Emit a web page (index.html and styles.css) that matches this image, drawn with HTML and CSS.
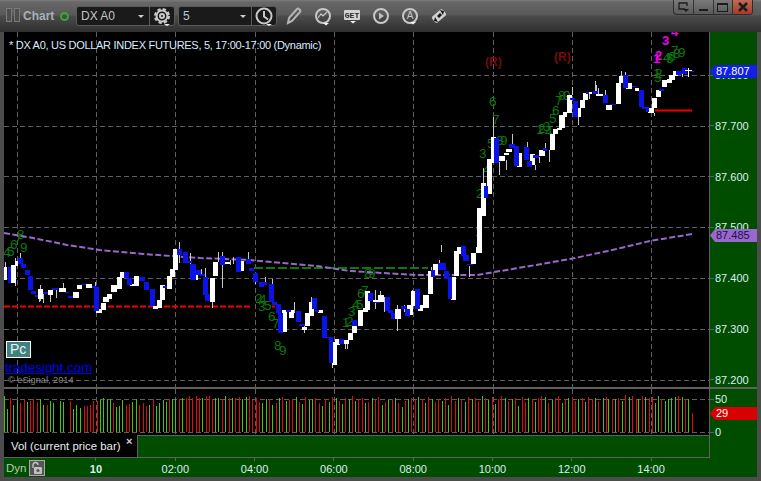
FILE: index.html
```html
<!DOCTYPE html>
<html lang="en">
<head>
<meta charset="utf-8">
<title>Chart</title>
<link rel="stylesheet" href="styles.css">
</head>
<body>
<div class="window">
  <header class="titlebar">
    <svg class="logo" width="14" height="14" viewBox="0 0 14 14"><rect class="logo-box" x=".5" y=".5" width="5" height="13"/><rect class="logo-box" x="8.5" y=".5" width="5" height="13"/></svg>
    <span class="app-name">Chart</span>
    <span class="status-ring"></span>
    <div class="combo">
      <span class="combo-value">DX A0</span>
      <span class="combo-arrow"></span>
      <span class="combo-btn">
        <svg width="25" height="20" viewBox="0 0 25 20"><circle class="gear-teeth" cx="12" cy="10" r="6.5"/><circle class="ico-line" cx="12" cy="10" r="5.5"/><circle class="ico-line" cx="12" cy="10" r="2"/><path class="ico-fill" d="M14 18h6l-3 2z"/></svg>
      </span>
    </div>
    <div class="combo combo-second">
      <span class="combo-value combo-num">5</span>
      <span class="combo-arrow"></span>
      <span class="combo-btn">
        <svg width="25" height="20" viewBox="0 0 25 20"><circle class="ico-line" cx="12" cy="10" r="7.5"/><path class="ico-line" d="M12 5v5.500l4 3"/><path class="ico-fill" d="M14 18h6l-3 2z"/></svg>
      </span>
    </div>
    <div class="tools">
      <span class="tool"><svg width="18" height="20" viewBox="0 0 18 20"><path class="ico-dim" d="M3 17l1-5 8-9q1-1 2 0l1 1q1 1 0 2l-8 9z"/></svg></span>
      <span class="tool"><svg width="20" height="20" viewBox="0 0 20 20"><circle class="ico-line" cx="10" cy="10" r="7"/><path class="ico-thin" d="M5 12l3-4 2 2 4-4"/><path class="ico-fill" d="M10 17h6l-3 2.500z"/></svg></span>
      <span class="tool"><svg width="20" height="20" viewBox="0 0 20 20"><rect class="get-box" x="2" y="4" width="16" height="10" rx="1"/><text class="get-text" x="10" y="12">GET</text><path class="ico-fill" d="M8 15h6l-3 2.500z"/></svg></span>
      <span class="tool"><svg width="20" height="20" viewBox="0 0 20 20"><circle class="ico-line" cx="10" cy="10" r="7"/><path class="ico-fill-dim" d="M8 6.500l5 3.500-5 3.500z"/></svg></span>
      <span class="tool"><svg width="20" height="20" viewBox="0 0 20 20"><circle class="ico-line" cx="10" cy="10" r="7"/><text class="a-text" x="10" y="13">A</text><path class="ico-fill" d="M10 16h6l-3 2.500z"/></svg></span>
      <span class="tool"><svg width="20" height="20" viewBox="0 0 20 20"><rect class="tag-body" x="3" y="6" width="14" height="8" rx="2" transform="rotate(-40 10 10)"/><path class="tag-arrow" d="M11 4l4 1-1 4zM9 16l-4-1 1-4zM8 10l3-3 2 2-3 3z"/></svg></span>
    </div>
    <div class="win-controls">
      <span class="win-btn"><svg width="14" height="12" viewBox="0 0 14 12"><path class="win-line" d="M9 8H3V2h8v3"/><path class="win-fill" d="M7 8h6l-3 3z"/></svg></span>
      <span class="win-btn"><span class="win-min"></span></span>
      <span class="win-btn"><span class="win-max"></span></span>
      <span class="win-btn win-close"><svg width="12" height="10" viewBox="0 0 12 10"><path class="win-x" d="M2 1l8 8M10 1l-8 8"/></svg></span>
    </div>
  </header>

  <main class="content">
    <div class="row price-row">
      <div class="pane">
        <svg class="chart" width="705" height="355" viewBox="4 32 705 355">
          <path class="grid" d="M4 75.500H709M4 126.500H709M4 176.500H709M4 227.500H709M4 278.500H709M4 329.500H709M4 380.500H709M17.500 32V387M96.500 32V387M175.500 32V387M255.500 32V387M334.500 32V387M413.500 32V387M493.500 32V387M572.500 32V387M651.500 32V387"/>
          <g class="td-green">
            <text x="3" y="257">4</text><text x="7" y="256">5</text><text x="10" y="249">6</text><text x="14" y="244">7</text><text x="17" y="239">8</text><text x="20" y="252">9</text>
            <text x="255" y="303">2</text><text x="259" y="304">4</text><text x="258" y="311">3</text><text x="264" y="310">5</text><text x="268" y="321">6</text><text x="272" y="328">7</text><text x="274" y="350">8</text><text x="279" y="355">9</text>
            <text x="342" y="327">1</text><text x="346" y="326">2</text><text x="348" y="316">3</text><text x="352" y="309">4</text><text x="356" y="309">5</text><text x="357" y="298">6</text><text x="361" y="295">7</text><text x="364" y="278">8</text><text x="368" y="278">9</text>
            <text x="475" y="236">1</text><text x="476" y="198">2</text><text x="479" y="158">3</text><text x="483" y="174">4</text><text x="487" y="148">5</text><text x="489" y="106">6</text><text x="492" y="124">7</text><text x="496" y="145">8</text><text x="500" y="145">9</text>
            <text x="536" y="134">1</text><text x="538" y="133">2</text><text x="543" y="131">3</text><text x="545" y="136">4</text><text x="549" y="123">5</text><text x="552" y="115">6</text><text x="555" y="105">7</text><text x="558" y="100">8</text><text x="563" y="100">9</text>
            <text x="653" y="78">1</text><text x="655" y="78">2</text><text x="654" y="82">3</text><text x="663" y="62">4</text><text x="666" y="63">5</text><text x="668" y="61">6</text><text x="671" y="55">7</text><text x="673" y="58">8</text><text x="678" y="57">9</text>
          </g>
          <path class="line-green" d="M254 268H428"/>
          <path class="line-purple" d="M4 233L33 238L67 245L100 250L143 254L200 258L250 260L283 263L317 266L350 271L383 273L417 275L477 275L530 266L570 259L608 251L650 241L692 234"/>
          <path class="line-red" d="M4 306.500H252M272 306.500H275"/>
          <path class="line-solid-red" d="M655 110.500H692"/>
          <path class="wick" d="M5.500 262V267M15.500 258V286M20.500 253V258M40.500 285V301M43.500 292V303M50.500 291V302M56.500 288V298M63.500 283V292M39.500 299V302M95.500 282V287M179.500 242V263M190.500 253V264M201.500 269V275M205.500 268V278M212.500 298V308M222.500 252V288M218.500 252V262M230.500 260V265M233.500 257V264M248.500 252V260M255.500 273V284M265.500 277V284M272.500 279V286M294.500 302V313M304.500 324V333M311.500 297V307M332.500 363V368M345.500 343V349M347.500 344V349M375.500 290V309M380.500 291V297M384.500 297V312M397.500 305V331M404.500 305V312M412.500 290V306M431.500 267V272M439.500 260V266M469.500 266V277M441.500 245V252M469 266V277M493.500 117V138M483.500 168V183M499.500 162V175M506.500 160V170M512.500 134V145M527.500 142V150M535.500 165V170M539.500 157V163M545.500 143V150M549.500 150V162M572.500 87V95M578.500 117V125M589.500 92V99M595.500 81V92M598.500 88V94M605.500 90V96M596.500 85V95M621.500 71V76M625.500 72V76M688.500 68V77M682.500 74V77M631.500 83V89M654.500 113V116"/>
          <path class="body-white" d="M4 267h3v13h-3zM11 265h5v18h-5zM15 261h3v5h-3zM38 289h5v10h-5zM48 290h5v5h-5zM59 288h7v4h-7zM73 292h6v6h-6zM77 285h5v4h-5zM86 284h6v4h-6zM96 309h6v4h-6zM101 303h5v7h-5zM103 297h6v5h-6zM107 294h5v5h-5zM111 285h6v7h-6zM117 277h5v12h-5zM120 272h5v6h-5zM130 284h5v2h-5zM134 276h5v10h-5zM153 306h5v3h-5zM157 300h5v8h-5zM160 285h5v15h-5zM167 276h5v13h-5zM170 269h5v8h-5zM173 249h5v21h-5zM193 273h5v7h-5zM210 278h5v24h-5zM213 262h5v14h-5zM225 262h5v2h-5zM239 261h5v10h-5zM282 310h5v22h-5zM289 310h5v8h-5zM302 327h5v3h-5zM305 313h5v13h-5zM309 302h5v14h-5zM318 310h5v3h-5zM332 342h5v23h-5zM335 339h5v6h-5zM344 340h5v4h-5zM348 333h5v7h-5zM352 320h5v13h-5zM358 310h5v16h-5zM363 308h5v4h-5zM365 291h5v19h-5zM373 300h5v2h-5zM378 295h6v7h-6zM395 309h6v10h-6zM407 305h6v10h-6zM411 291h5v15h-5zM418 305h5v6h-5zM423 295h6v13h-6zM428 271h5v23h-5zM433 264h5v11h-5zM451 277h5v23h-5zM454 251h5v25h-5zM457 247h5v7h-5zM471 253h5v11h-5zM476 247h6v6h-6zM477 208h5v45h-5zM481 183h5v33h-5zM487 159h5v35h-5zM491 137h5v26h-5zM499 156h6v5h-6zM504 153h5v2h-5zM506 149h6v3h-6zM517 153h5v14h-5zM530 154h5v11h-5zM539 150h6v6h-6zM550 134h5v16h-5zM553 129h5v5h-5zM557 128h5v2h-5zM559 115h6v13h-6zM563 112h4v5h-4zM567 95h5v18h-5zM576 108h5v9h-5zM580 100h5v8h-5zM583 93h5v7h-5zM589 92h3v2h-3zM596 94h7v2h-7zM606 105h6v5h-6zM616 83h5v21h-5zM619 76h4v7h-4zM626 83h6v6h-6zM635 88h4v3h-4zM648 108h6v5h-6zM652 98h5v10h-5zM656 90h5v7h-5zM662 80h5v7h-5zM667 79h5v4h-5zM669 75h6v5h-6zM673 71h5v5h-5zM679 73h4v2h-4zM686 70h6v1h-6z"/>
          <path class="body-blue" d="M8 267h3v16h-3zM18 258h5v6h-5zM21 264h5v4h-5zM25 270h5v5h-5zM28 276h5v14h-5zM31 291h5v3h-5zM35 295h3v2h-3zM43 292h5v2h-5zM52 288h6v2h-6zM65 292h4v1h-4zM68 296h5v2h-5zM81 284h5v1h-5zM92 286h5v2h-5zM94 287h5v24h-5zM124 272h5v6h-5zM127 278h5v7h-5zM139 277h6v4h-6zM144 282h5v8h-5zM150 289h5v17h-5zM163 286h4v2h-4zM177 249h5v6h-5zM183 252h5v11h-5zM187 261h5v2h-5zM190 264h6v16h-6zM196 270h5v5h-5zM200 274h5v2h-5zM203 277h5v18h-5zM205 294h5v7h-5zM220 256h5v9h-5zM236 257h5v15h-5zM246 259h5v5h-5zM249 268h5v3h-5zM253 273h5v9h-5zM259 282h5v5h-5zM264 282h3v3h-3zM269 284h5v18h-5zM272 302h5v3h-5zM276 304h5v9h-5zM278 313h5v20h-5zM286 310h5v2h-5zM296 311h5v11h-5zM299 324h6v2h-6zM312 298h5v11h-5zM315 310h4v2h-4zM322 316h5v22h-5zM327 337h4v1h-4zM329 337h4v26h-4zM339 339h5v5h-5zM352 320h5v6h-5zM368 293h5v8h-5zM375 302h5v1h-5zM385 297h5v14h-5zM388 310h5v3h-5zM391 313h4v6h-4zM401 306h5v3h-5zM405 309h5v7h-5zM415 289h5v20h-5zM431 270h4v7h-4zM438 263h8v7h-8zM444 271h5v8h-5zM448 277h4v22h-4zM461 246h5v10h-5zM463 255h6v6h-6zM467 264h6v1h-6zM484 186h4v12h-4zM494 138h5v25h-5zM509 144h6v4h-6zM514 146h5v20h-5zM524 147h5v13h-5zM527 161h5v6h-5zM533 155h6v3h-6zM543 148h4v3h-4zM570 98h5v2h-5zM573 101h5v16h-5zM586 92h3v2h-3zM593 91h5v3h-5zM603 95h5v8h-5zM610 104h6v1h-6zM623 75h5v13h-5zM632 86h5v1h-5zM639 90h5v17h-5zM642 107h6v2h-6zM646 107h3v5h-3zM659 89h5v2h-5zM676 71h6v4h-6zM682 68h5v6h-5zM690 71h4v1h-4z"/>
          <path class="wick-top" d="M688.500 68V77M685 70.500H692"/>
          <g class="td-magenta">
            <text x="653" y="63">1</text><text x="655" y="60">2</text><text x="662" y="45">3</text><text x="671" y="36">4</text>
          </g>
          <g class="reversal">
            <text x="485" y="66">(R)</text><text x="554" y="61">(R)</text>
          </g>
        </svg>
        <div class="caption">* DX A0, US DOLLAR INDEX FUTURES, 5, 17:00-17:00 (Dynamic)</div>
        <div class="notes">
          <span class="pc-badge">Pc</span>
          <a class="site-link" href="#">tradesight.com</a>
          <span class="copyright">© eSignal, 2014</span>
        </div>
      </div>
      <div class="axis price-axis">
        <span class="tick">87.800</span>
        <span class="tick">87.700</span>
        <span class="tick">87.600</span>
        <span class="tick">87.500</span>
        <span class="tick">87.400</span>
        <span class="tick">87.300</span>
        <span class="tick">87.200</span>
        <span class="tag tag-blue">87.807</span>
        <span class="tag tag-purple">87.485</span>
      </div>
    </div>
    <div class="divider"></div>
    <div class="row vol-row">
      <div class="pane">
        <svg class="chart" width="705" height="46" viewBox="4 389 705 46">
          <path class="grid" d="M4 399.500H709M4 432.500H709M17.500 389V435M96.500 389V435M175.500 389V435M255.500 389V435M334.500 389V435M413.500 389V435M493.500 389V435M572.500 389V435M651.500 389V435"/>
          <path class="vol-green" d="M4.500 396V432M7.500 409V432M13.500 405V432M17.500 400V432M27.500 402V432M40.500 399V432M43.500 405V432M50.500 401V432M53.500 403V432M60.500 401V432M63.500 402V432M73.500 409V432M76.500 405V432M80.500 408V432M100.500 400V432M103.500 398V432M107.500 399V432M110.500 399V432M116.500 407V432M119.500 406V432M122.500 400V432M132.500 402V432M136.500 399V432M149.500 405V432M156.500 406V432M159.500 403V432M163.500 400V432M166.500 402V432M172.500 399V432M175.500 399V432M182.500 398V432M202.500 398V432M215.500 398V432M218.500 398V432M225.500 396V432M232.500 398V432M242.500 399V432M246.500 397V432M262.500 403V432M266.500 399V432M272.500 405V432M279.500 398V432M286.500 401V432M296.500 397V432M302.500 404V432M309.500 400V432M312.500 399V432M322.500 406V432M329.500 402V432M336.500 398V432M342.500 404V432M349.500 399V432M355.500 401V432M365.500 403V432M372.500 398V432M382.500 405V432M388.500 400V432M395.500 398V432M402.500 407V432M408.500 399V432M418.500 397V432M425.500 403V432M432.500 399V432M442.500 401V432M448.500 405V432M458.500 398V432M465.500 402V432M472.500 399V432M482.500 396V432M488.500 400V432M495.500 404V432M505.500 398V432M512.500 399V432M518.500 406V432M528.500 398V432M535.500 402V432M545.500 397V432M552.500 400V432M562.500 403V432M568.500 398V432M578.500 399V432M585.500 402V432M595.500 398V432M603.500 398V432M608.500 399V432M615.500 399V432M622.500 401V432M629.500 397V432M638.500 399V432M645.500 397V432M655.500 403V432M658.500 396V432M665.500 401V432M668.500 399V432M671.500 398V432M675.500 397V432M682.500 397V432M688.500 399V432"/>
          <path class="vol-red" d="M10.500 398V432M20.500 403V432M24.500 399V432M30.500 401V432M33.500 399V432M37.500 402V432M47.500 405V432M70.500 401V432M84.500 406V432M87.500 406V432M90.500 405V432M93.500 401V432M97.500 401V432M113.500 403V432M126.500 405V432M129.500 404V432M139.500 405V432M143.500 403V432M146.500 406V432M153.500 399V432M169.500 399V432M179.500 399V432M186.500 398V432M189.500 396V432M192.500 398V432M196.500 396V432M199.500 398V432M206.500 396V432M209.500 396V432M212.500 399V432M222.500 399V432M229.500 398V432M235.500 398V432M239.500 397V432M249.500 396V432M252.500 400V432M256.500 398V432M259.500 402V432M269.500 399V432M276.500 403V432M282.500 397V432M289.500 400V432M292.500 399V432M299.500 402V432M305.500 397V432M315.500 398V432M319.500 403V432M325.500 399V432M332.500 397V432M339.500 401V432M345.500 398V432M352.500 396V432M358.500 399V432M362.500 398V432M368.500 402V432M375.500 399V432M378.500 397V432M385.500 402V432M392.500 399V432M398.500 403V432M405.500 401V432M411.500 398V432M415.500 400V432M422.500 399V432M428.500 397V432M435.500 402V432M438.500 399V432M445.500 398V432M451.500 396V432M455.500 401V432M461.500 399V432M468.500 397V432M475.500 398V432M478.500 401V432M485.500 398V432M492.500 397V432M498.500 399V432M501.500 396V432M508.500 401V432M515.500 398V432M522.500 397V432M525.500 402V432M532.500 399V432M538.500 398V432M541.500 396V432M548.500 403V432M555.500 398V432M558.500 396V432M565.500 399V432M572.500 397V432M575.500 401V432M582.500 398V432M588.500 397V432M592.500 399V432M598.500 401V432M606.500 397V432M612.500 399V432M618.500 398V432M625.500 395V432M632.500 396V432M636.500 399V432M642.500 396V432M649.500 398V432M652.500 397V432M661.500 399V432M678.500 396V432M685.500 399V432M692.500 413V432"/>
        </svg>
      </div>
      <div class="axis vol-axis">
        <span class="tick">50</span>
        <span class="tick">0</span>
        <span class="tag tag-red">29</span>
      </div>
    </div>
    <div class="row tab-row">
      <div class="tab"><span class="tab-label">Vol (current price bar)</span><span class="tab-close">×</span></div>
      <div class="tab-fill"></div>
      <div class="axis-fill"></div>
    </div>
    <div class="row time-row">
      <div class="mode">
        <span class="mode-label">Dyn</span>
        <span class="lock"><svg width="14" height="14" viewBox="0 0 14 14"><path class="lock-shackle" d="M3 7V4q0-2.500 2.500-2.500T8 4"/><rect class="lock-body" x="4" y="6" width="8" height="7" rx="1"/><circle class="lock-hole" cx="8" cy="9.500" r="1.500"/></svg></span>
      </div>
      <div class="times">
        <span class="time time-strong">10</span>
        <span class="time">02:00</span>
        <span class="time">04:00</span>
        <span class="time">06:00</span>
        <span class="time">08:00</span>
        <span class="time">10:00</span>
        <span class="time">12:00</span>
        <span class="time">14:00</span>
      </div>
    </div>
  </main>
</div>
</body>
</html>
```

FILE: styles.css
```css
* { box-sizing: border-box; }
html, body { margin: 0; padding: 0; background: #4a4a4a; }
body { width: 761px; height: 481px; overflow: hidden; font-family: "Liberation Sans", Arial, sans-serif; }
svg { display: block; }

.window { width: 761px; height: 481px; display: flex; flex-direction: column; background: #4c4c4c; }

/* Title bar */
.titlebar {
  height: 32px; flex: none; display: flex; align-items: center; padding: 0 8px 0 6px; position: relative;
  background: linear-gradient(#7c7c7c 0, #686868 2px, #585858 15px, #4b4b4b 16px, #2f2f2f 32px);
}
.logo { flex: none; margin-top: -2px; }
.logo-box { fill: #4e4e4e; stroke: #7a7a7a; }
.app-name { margin-left: 3px; width: 37px; flex: none; font-size: 12px; font-weight: bold; color: #a8b0b8; }
.status-ring { width: 9px; height: 9px; flex: none; border-radius: 50%; border: 2.5px solid #35a835; margin-right: 7px; }
.combo {
  width: 99px; height: 20px; flex: none; display: flex; align-items: center; margin-top: 0;
  background: #1a1a1a; border: 1px solid #5a5a5a; border-radius: 3px;
}
.combo-second { margin-left: 3px; }
.combo-value { flex: 1; padding-left: 4px; font-size: 12px; color: #c4c4c4; }
.combo-num { color: #b8c8d8; }
.combo-arrow { width: 0; height: 0; margin-right: 5px; border: 3px solid transparent; border-top: 3px solid #ccc; border-bottom: 0; }
.combo-btn { width: 25px; height: 18px; flex: none; display: flex; align-items: center; border-left: 1px solid #5a5a5a; overflow: visible; }
.combo-btn svg { overflow: visible; }
.tools { display: flex; flex: none; margin-left: 2px; }
.tool { width: 29px; height: 22px; display: flex; align-items: center; justify-content: center; }
.ico-line { fill: none; stroke: #c8c8c8; stroke-width: 2; }
.ico-thin { fill: none; stroke: #c8c8c8; stroke-width: 1.2; }
.ico-dim { fill: none; stroke: #b4b4b4; stroke-width: 2; }
.ico-fill { fill: #f0f0f0; }
.ico-fill-dim { fill: #c0c0c0; }
.gear-teeth { fill: none; stroke: #c8c8c8; stroke-width: 3; stroke-dasharray: 3 2.100; }
.get-box { fill: #d4d4d4; }
.get-text { font-size: 8px; font-weight: bold; fill: #2a2a2a; text-anchor: middle; font-family: "Liberation Mono", monospace; }
.a-text { font-size: 10px; fill: #c8c8c8; text-anchor: middle; }
.tag-body { fill: #d0d0d0; }
.tag-arrow { fill: #151515; }
.win-controls {
  position: absolute; top: 0; right: 8px; width: 80px; height: 15px; display: flex;
  border: 1px solid #2c2c2c; border-top: 0; border-radius: 0 0 4px 4px; overflow: hidden;
  background: linear-gradient(#7a7a7a, #5a5a5a);
}
.win-btn { flex: 1; display: flex; align-items: center; justify-content: center; border-left: 1px solid #333; }
.win-btn:first-child { border-left: 0; }
.win-close { background: linear-gradient(#c06a58, #a83a28); }
.win-line { fill: none; stroke: #1c1c1c; stroke-width: 1.300; }
.win-fill { fill: #1c1c1c; }
.win-min { width: 9px; height: 2px; margin-top: 6px; background: #1c1c1c; }
.win-max { width: 11px; height: 9px; border: 1px solid #1c1c1c; border-top-width: 2px; }
.win-x { fill: none; stroke: #1c1c1c; stroke-width: 2.500; }

/* Panes */
.content { flex: none; width: 753px; margin-left: 4px; display: flex; flex-direction: column; }
.row { display: flex; }
.price-row { height: 355px; }
.vol-row { height: 46px; }
.divider { height: 2px; background: #606060; }
.pane { width: 705px; flex: none; position: relative; background: #000; overflow: hidden; }
.axis {
  width: 48px; flex: none; position: relative; background: #004d00; border-left: 1px solid #606060;
  display: flex; flex-direction: column; font-size: 11px; color: #d8f0f0;
}
.tick { display: flex; align-items: center; height: 14px; line-height: 14px; }
.tick::before { content: ""; width: 4px; height: 1px; margin-right: 1px; background: #5f5f5f; flex: none; }
.price-axis { padding-top: 36px; gap: 36.830px; }
.vol-axis { padding-top: 3px; gap: 19px; }

.tag { position: absolute; left: 0; height: 13px; line-height: 13px; width: 47px; padding-left: 6px; font-size: 11px; clip-path: polygon(0 50%, 5px 0, 100% 0, 100% 100%, 5px 100%); }
.tag-blue { top: 33px; background: #1020e8; color: #fff; }
.tag-purple { top: 197px; background: #9868d0; color: #201040; }
.tag-red { top: 18px; background: #d80000; color: #fff; }

.chart { position: absolute; top: 0; left: 0; }
.grid { fill: none; stroke: #5f5f5f; stroke-dasharray: 5 3; shape-rendering: crispEdges; }
.line-green { fill: none; stroke: #0a7a0a; stroke-width: 2; stroke-dasharray: 9 3; }
.line-purple { fill: none; stroke: #9a68cc; stroke-width: 2; stroke-dasharray: 6 2.500; }
.line-red { fill: none; stroke: #f00000; stroke-width: 2; stroke-dasharray: 6 2; }
.line-solid-red { fill: none; stroke: #f00000; stroke-width: 2; }
.wick, .wick-top { fill: none; stroke: #c8c8c8; shape-rendering: crispEdges; }
.wick-top { stroke: #fff; }
.body-white { fill: #fff; }
.body-blue { fill: #0a14e8; }
.td-green { font-size: 13.500px; fill: #0a780a; }
.td-magenta { font-size: 13px; font-weight: bold; fill: #f000f0; }
.reversal { font-size: 12px; fill: #7a0a0a; font-weight: bold; }
.vol-green { fill: none; stroke: #44c808; shape-rendering: crispEdges; }
.vol-red { fill: none; stroke: #e00c0c; shape-rendering: crispEdges; }

.caption { position: absolute; left: 5px; top: 6px; font-size: 11px; letter-spacing: -0.290px; line-height: 14px; color: #d8ecff; white-space: nowrap; }
.notes { position: absolute; left: 1px; top: 309px; display: flex; flex-direction: column; align-items: flex-start; }
.pc-badge { width: 25px; height: 17px; margin-left: 1px; background: #3f8080; border: 1px solid #fff; color: #e8f4f4; font-size: 14px; line-height: 15px; padding-left: 3px; }
.site-link { margin-top: 2px; font-size: 13.300px; line-height: 15px; color: #0000f0; text-decoration: underline; }
.copyright { margin: -1px 0 0 3px; font-size: 9.200px; line-height: 12px; color: #8a8a8a; }

/* Tab row */
.tab-row { height: 23px; background: #004d00; }
.tab { width: 133px; flex: none; position: relative; display: flex; align-items: center; padding-left: 7px; background: #000; border-bottom: 1px solid #606060; color: #e4f0f0; font-size: 11.400px; }
.tab-close { position: absolute; left: 122px; top: 0; font-size: 11px; line-height: 12px; font-weight: bold; color: #d0d0d0; }
.tab-fill { width: 572px; flex: none; background: #004d00; border: 1px solid #606060; border-right: 0; }
.axis-fill { flex: 1; border-left: 1px solid #606060; }

/* Time axis */
.time-row { height: 19px; background: #004d00; color: #d8f0f0; font-size: 11px; }
.mode { width: 52.350px; flex: none; display: flex; align-items: center; padding-left: 2px; }
.mode-label { width: 23px; flex: none; font-size: 11.500px; color: #b8c8b8; }
.lock { width: 16px; height: 16px; flex: none; display: flex; align-items: center; justify-content: center; background: #555; border: 1px solid #aaa; }
.lock-shackle { fill: none; stroke: #c8c8c8; stroke-width: 1.300; }
.lock-body { fill: #c0c0c0; }
.lock-hole { fill: #555; }
.times { display: flex; }
.time {
  width: 79.300px; text-align: center; line-height: 22px;
  background: linear-gradient(#5f5f5f, #5f5f5f) center top / 1px 3px no-repeat;
}
.time-strong { font-weight: bold; }
```
